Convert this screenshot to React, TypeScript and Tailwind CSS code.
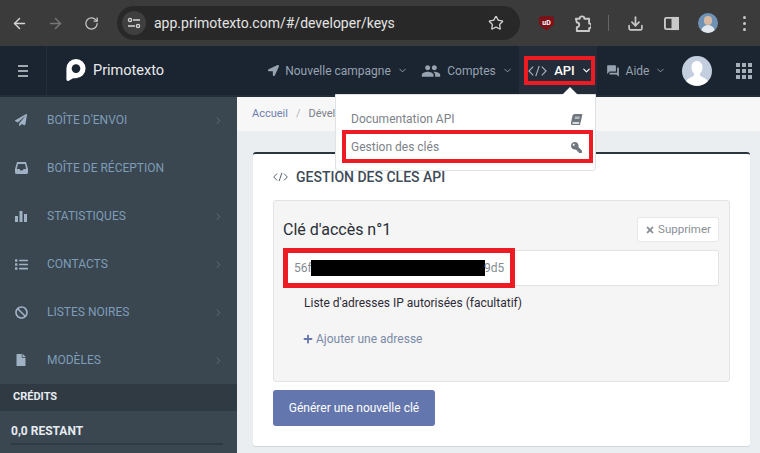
import { ArrowLeft, ArrowRight, ChevronDown, ChevronRight, Download, RotateCw, Star } from "lucide-react"
import { FaBan, FaBook, FaFile, FaKey, FaList, FaLocationArrow, FaPaperPlane, FaPlus, FaTimes } from "react-icons/fa"
import { MdForum, MdPeople } from "react-icons/md"

const font = "font-['Roboto','Liberation_Sans',sans-serif]"

function CodeIcon({ className }: { className?: string }) {
    return (
        <svg viewBox="0 0 22 14" className={className} fill="none" stroke="currentColor" strokeWidth="1.3">
            <path d="M6 2 1 7l5 5" />
            <path d="M13 1 9 13" />
            <path d="M16 2l5 5-5 5" />
        </svg>
    )
}

function BarsIcon() {
    return (
        <svg viewBox="0 0 12 12" className="h-3 w-3" fill="currentColor">
            <rect x="0" y="6" width="3" height="6" />
            <rect x="4.5" y="1" width="3" height="11" />
            <rect x="9" y="4" width="3" height="8" />
        </svg>
    )
}

function InboxIcon() {
    return (
        <svg viewBox="0 0 13 12" className="h-3 w-[13px]" fill="currentColor">
            <path d="M2 0h9l2 7v3.5a1.5 1.5 0 0 1-1.5 1.5h-10A1.5 1.5 0 0 1 0 10.500V7zM3 2 1.800 7h2.700l1 1.500h2l1-1.500h2.700L10 2z" fillRule="evenodd" />
        </svg>
    )
}

function BrowserBar() {
    return (
        <div className="flex h-[46px] items-center bg-[#3b3b3b] text-[#c7c7c7]">
            <div className="flex w-[117px] items-center pl-[11px]">
                <ArrowLeft size={17} strokeWidth={2} className="text-[#d5d5d5]" />
                <ArrowRight size={17} strokeWidth={2} className="ml-[19px] text-[#777777]" />
                <RotateCw size={15} strokeWidth={2} className="ml-[20px]" />
            </div>
            <div className="flex h-[34px] w-[403px] items-center rounded-full bg-[#282828]">
                <div className="ml-[5px] flex h-6 w-6 items-center justify-center rounded-full bg-[#3f3f3f]">
                    <svg viewBox="0 0 14 12" className="h-3 w-[14px]" fill="none" stroke="#d8d8d8" strokeWidth="1.3">
                        <circle cx="3" cy="3" r="1.6" />
                        <path d="M6 3h7M1 9h7" />
                        <circle cx="11" cy="9" r="1.6" />
                    </svg>
                </div>
                <span className="ml-[8px] font-['Roboto',sans-serif] text-[14px] text-[#e4e4e4]">app.primotexto.com/#/developer/keys</span>
                <Star size={16} strokeWidth={2} className="ml-auto mr-[16px] text-[#d0d0d0]" />
            </div>
            <div className="ml-[19px] flex h-[15px] w-[15px] items-center justify-center bg-[#7c1118] [clip-path:polygon(0_10%,50%_0,100%_10%,100%_60%,50%_100%,0_60%)]">
                <span className="text-[7px] font-bold leading-none text-white">uD</span>
            </div>
            <svg viewBox="0 0 18 18" className="ml-[20px] h-[17px] w-[17px]" fill="none" stroke="#c9c9c9" strokeWidth="2">
                <path d="M2 4h4a2.500 2.500 0 0 1 5 0h5v5a2.500 2.500 0 0 1 0 5v3H3v-4a2.500 2.500 0 0 0 0-5z" strokeLinejoin="round" />
            </svg>
            <div className="ml-[17px] h-4 w-px bg-[#666666]" />
            <Download size={17} strokeWidth={2.4} className="ml-[18px]" />
            <svg viewBox="0 0 16 16" className="ml-[20px] h-[15px] w-[15px]" fill="none" stroke="#c9c9c9" strokeWidth="2">
                <rect x="1" y="2" width="14" height="12" rx="1.500" />
                <rect x="9" y="2" width="6" height="12" fill="#c9c9c9" />
            </svg>
            <div className="ml-[19px] h-5 w-5 overflow-hidden rounded-full bg-[#6f93b5]">
                <div className="mx-auto mt-[3px] h-[9px] w-[8px] rounded-full bg-[#d8b8a0]" />
                <div className="mx-auto h-[8px] w-[14px] rounded-t-full bg-[#e3e8ee]" />
            </div>
            <div className="ml-[25px] flex flex-col gap-[3px]">
                <div className="h-[3px] w-[3px] rounded-full bg-[#c9c9c9]" />
                <div className="h-[3px] w-[3px] rounded-full bg-[#c9c9c9]" />
                <div className="h-[3px] w-[3px] rounded-full bg-[#c9c9c9]" />
            </div>
        </div>
    )
}

function NavItem({ icon, label, width }: { icon: React.ReactNode; label: string; width: string }) {
    return (
        <div className={`flex items-center justify-center gap-[6px] text-[#97a3b0] ${width}`}>
            {icon}
            <span className="text-[12px]">{label}</span>
            <ChevronDown size={11} strokeWidth={2} />
        </div>
    )
}

function TopNav() {
    return (
        <div className="flex h-[51px] items-stretch border-b-2 border-[#252d38] bg-[#1b2431]">
            <div className="flex w-[47px] items-center justify-center border-r border-[#252d38]">
                <div className="flex w-[10px] flex-col gap-[3px]">
                    <div className="h-[2px] bg-[#a1a8b0]" />
                    <div className="h-[2px] bg-[#a1a8b0]" />
                    <div className="h-[2px] bg-[#a1a8b0]" />
                </div>
            </div>
            <div className="ml-[19px] flex w-[195px] items-center">
                <svg viewBox="0 0 20 24" className="h-[23px] w-5">
                    <path d="M10 0a10 10 0 0 1 0 20H7l-5 3a2 2 0 0 1-2-2V10A10 10 0 0 1 10 0z" fill="#ffffff" />
                    <circle cx="10" cy="10" r="4.500" fill="#1b2431" />
                </svg>
                <span className="ml-[7px] text-[14.5px] text-[#e8eaec]">Primotexto</span>
            </div>
            <NavItem icon={<FaLocationArrow size={11} />} label="Nouvelle campagne" width="w-[154px]" />
            <NavItem icon={<MdPeople size={20} />} label="Comptes" width="w-[104px]" />
            <div className="flex w-[78px] items-center justify-center gap-[6px] bg-[#232c38] pl-[3px] text-white">
                <CodeIcon className="h-[12px] w-[21px] text-[#aab3bd]" />
                <span className="text-[13px] font-medium">API</span>
                <ChevronDown size={11} strokeWidth={2.5} />
            </div>
            <NavItem icon={<MdForum size={14} />} label="Aide" width="w-[78px]" />
            <div className="ml-[7px] self-center">
                <svg viewBox="0 0 30 30" className="h-[30px] w-[30px]">
                    <circle cx="15" cy="15" r="15" fill="#c3cede" />
                    <path d="M15 5c3.500 0 5.500 3 5.500 6.500 0 2.500-1 4.500-2.500 6v2c1 1.500 6 2.500 8 5.500a15 15 0 0 1-22 0c2-3 7-4 8-5.500v-2c-1.500-1.500-2.500-3.500-2.500-6C9.500 8 11.500 5 15 5z" fill="#ffffff" />
                </svg>
            </div>
            <div className="ml-[24px] grid grid-cols-3 gap-[2px] self-center">
                {Array.from({ length: 9 }).map((_, i) => (
                    <div key={i} className="h-[4px] w-[4px] bg-[#a6b0bb]" />
                ))}
            </div>
        </div>
    )
}

const menu = [
    { label: "BOÎTE D'ENVOI", icon: <FaPaperPlane size={12} />, arrow: true },
    { label: "BOÎTE DE RÉCEPTION", icon: <InboxIcon />, arrow: false },
    { label: "STATISTIQUES", icon: <BarsIcon />, arrow: true },
    { label: "CONTACTS", icon: <FaList size={13} />, arrow: true },
    { label: "LISTES NOIRES", icon: <FaBan size={13} />, arrow: true },
    { label: "MODÈLES", icon: <FaFile size={12} />, arrow: true },
]

function Sidebar() {
    return (
        <div className="flex w-[237px] shrink-0 flex-col bg-[#3a4650]">
            <div className="-mt-px flex flex-col">
                {menu.map((item) => (
                    <div key={item.label} className="flex h-[48px] items-center pl-[15px] pr-[13px] text-[12px] text-[#7e9db8]">
                        <div className="flex w-[32px] items-center text-[#9fb2c4]">{item.icon}</div>
                        <span>{item.label}</span>
                        {item.arrow && <ChevronRight size={11} className="ml-auto text-[#66727c]" />}
                    </div>
                ))}
            </div>
            <div className="flex h-[27px] items-center bg-[#2f3a42] pl-[13px] text-[11px] font-bold text-[#e6ebf0]">CRÉDITS</div>
            <div className="ml-[11px] mr-[14px] flex h-[34px] items-end border-b-2 border-[#2f3a42] pb-[3px] text-[12px] font-bold text-[#e6ebf0]">0,0 RESTANT</div>
        </div>
    )
}

function KeysCard() {
    return (
        <div className="ml-[16px] mr-[10px] mt-[21px] flex h-[294px] flex-col rounded-[3px] border-t-2 border-[#2b3540] bg-white px-[20px] shadow-[0_1px_1px_rgba(0,0,0,0.1)]">
            <div className="flex h-[46px] items-center text-[#404b58]">
                <CodeIcon className="h-[12px] w-[15px]" />
                <span className="ml-[8px] text-[14px] font-medium">GESTION DES CLES API</span>
            </div>
            <div className="h-[182px] rounded-[3px] border border-[#e3e3e3] bg-[#f5f5f5] px-[10px]">
                <div className="flex h-[49px] items-center justify-between pt-[8px]">
                    <span className="-ml-px text-[16px] text-[#2a2f35]">Clé d'accès n°1</span>
                    <div className="flex h-[25px] w-[82px] items-center justify-center gap-[3px] rounded-[3px] border border-[#e7e7e7] bg-white text-[11.5px] text-[#8a8f96]">
                        <FaTimes size={10} />
                        <span>Supprimer</span>
                    </div>
                </div>
                <div className="flex h-[36px] items-center rounded-[3px] border border-[#e3e3e3] bg-white pl-[9px] text-[12px] text-[#858b92]">56f</div>
                <div className="ml-[20px] mt-[8px] text-[12px] text-[#2e2a35]">Liste d'adresses IP autorisées (facultatif)</div>
                <div className="ml-[19px] mt-[18px] flex items-center gap-[3px] text-[12px] text-[#7b8aa8]">
                    <FaPlus size={10} className="text-[#6577ac]" />
                    <span>Ajouter une adresse</span>
                </div>
            </div>
            <button className="mt-[8px] h-[36px] w-[162px] rounded-[3px] bg-[#6376ad] text-[12px] text-white">Générer une nouvelle clé</button>
        </div>
    )
}

export default function App() {
    return (
        <div className={`relative h-[453px] w-[760px] overflow-hidden bg-[#ebeef1] ${font}`}>
            <BrowserBar />
            <TopNav />
            <div className="flex h-[356px]">
                <Sidebar />
                <div className="flex-1">
                    <div className="flex h-[34px] items-center gap-[8px] bg-[#f7f7f7] pl-[15px] text-[11px]">
                        <span className="text-[#6e7fae]">Accueil</span>
                        <span className="text-[#b5b5b5]">/</span>
                        <span className="w-[28px] overflow-hidden whitespace-nowrap text-[#7a8087]">Développeur</span>
                    </div>
                    <KeysCard />
                </div>
            </div>

            {/* dropdown under the API entry */}
            <div className="absolute left-[335px] top-[94px] h-[77px] w-[261px] rounded-b-[3px] border border-[#dfe3e7] bg-white text-[12px] text-[#7d8289]">
                <div className="flex h-[38px] items-center justify-between pl-[15px] pr-[13px] pt-[10px]">
                    <span>Documentation API</span>
                    <FaBook size={11} className="-skew-x-12 text-[#70767d]" />
                </div>
                <div className="flex h-[28px] items-center justify-between pl-[15px] pr-[13px]">
                    <span>Gestion des clés</span>
                    <FaKey size={11} className="-scale-x-100 text-[#70767d]" />
                </div>
            </div>
            <div className="absolute left-[562px] top-[87px] h-0 w-0 border-x-[8px] border-b-[8px] border-x-transparent border-b-white" />

            {/* red annotation boxes and the redaction bar */}
            <div className="absolute left-[524px] top-[56px] h-[29px] w-[71px] border-[4px] border-[#ed1c24]" />
            <div className="absolute left-[342px] top-[130px] h-[33px] w-[251px] border-[4px] border-[#ed1c24]" />
            <div className="absolute left-[283px] top-[248px] h-[40px] w-[232px] border-[5px] border-[#ed1c24]" />
            <div className="absolute left-[311px] top-[260px] h-[16px] w-[174px] bg-black" />
            <span className="absolute left-[484px] top-[260px] text-[12px] leading-[16px] text-[#858b92]">9d5</span>
        </div>
    )
}
